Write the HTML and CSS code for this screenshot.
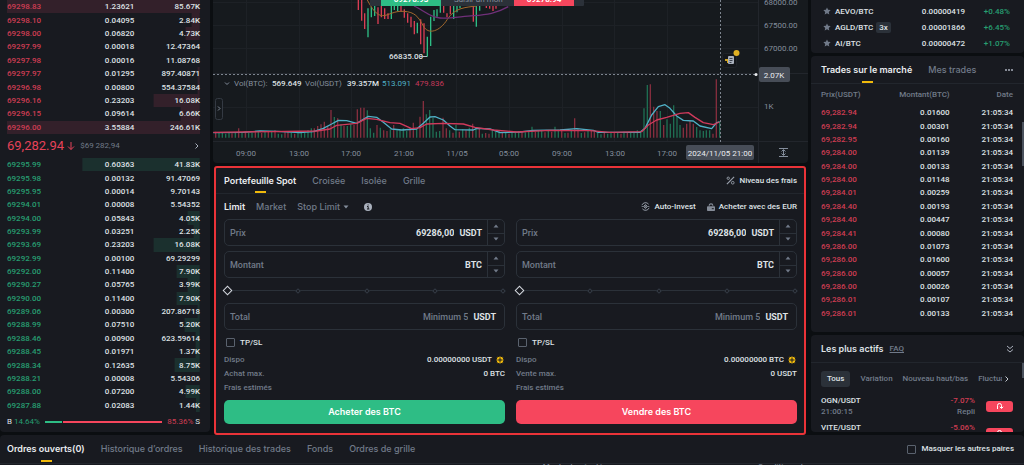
FILE: index.html
```html
<!DOCTYPE html>
<html lang="fr">
<head>
<meta charset="utf-8">
<meta name="viewport" content="width=device-width, initial-scale=1">
<title>BTC/USDT – Trading Spot</title>
<link rel="stylesheet" href="styles.css">
<script src="chart.js" defer></script>
</head>
<body>
<main class="desk">
  <section class="panel book" aria-label="Carnet d'ordres">
    <table class="book-table asks">
      <tr style="--depth:100%"><td>69298.83</td><td>1.23621</td><td>85.67K</td></tr>
      <tr style="--depth:4%"><td>69298.10</td><td>0.04095</td><td>2.84K</td></tr>
      <tr style="--depth:7%"><td>69298.00</td><td>0.06820</td><td>4.73K</td></tr>
      <tr style="--depth:0%"><td>69297.99</td><td>0.00018</td><td>12.47364</td></tr>
      <tr style="--depth:0%"><td>69297.98</td><td>0.00016</td><td>11.08768</td></tr>
      <tr style="--depth:1%"><td>69297.97</td><td>0.01295</td><td>897.40871</td></tr>
      <tr style="--depth:1%"><td>69296.98</td><td>0.00800</td><td>554.37584</td></tr>
      <tr style="--depth:24%"><td>69296.16</td><td>0.23203</td><td>16.08K</td></tr>
      <tr style="--depth:10%"><td>69296.15</td><td>0.09614</td><td>6.66K</td></tr>
      <tr style="--depth:100%"><td>69296.00</td><td>3.55884</td><td>246.61K</td></tr>
    </table>
    <div class="last-price">
      <strong>69,282.94</strong>
      <svg class="arrow" viewBox="0 0 8 10" aria-hidden="true"><path d="M4 1v7.500M1 5.500l3 3 3-3"/></svg>
      <span>$69 282,94</span>
      <svg class="more" viewBox="0 0 6 8" aria-hidden="true"><path d="M1.500 1.500L4 4 1.500 6.500"/></svg>
    </div>
    <table class="book-table bids">
      <tr style="--depth:61%"><td>69295.99</td><td>0.60363</td><td>41.83K</td></tr>
      <tr style="--depth:0%"><td>69295.98</td><td>0.00132</td><td>91.47069</td></tr>
      <tr style="--depth:0%"><td>69295.95</td><td>0.00014</td><td>9.70143</td></tr>
      <tr style="--depth:0%"><td>69294.01</td><td>0.00008</td><td>5.54352</td></tr>
      <tr style="--depth:6%"><td>69294.00</td><td>0.05843</td><td>4.05K</td></tr>
      <tr style="--depth:3%"><td>69293.99</td><td>0.03251</td><td>2.25K</td></tr>
      <tr style="--depth:24%"><td>69293.69</td><td>0.23203</td><td>16.08K</td></tr>
      <tr style="--depth:0%"><td>69292.99</td><td>0.00100</td><td>69.29299</td></tr>
      <tr style="--depth:12%"><td>69292.00</td><td>0.11400</td><td>7.90K</td></tr>
      <tr style="--depth:6%"><td>69290.27</td><td>0.05765</td><td>3.99K</td></tr>
      <tr style="--depth:12%"><td>69290.00</td><td>0.11400</td><td>7.90K</td></tr>
      <tr style="--depth:1%"><td>69289.06</td><td>0.00300</td><td>207.86718</td></tr>
      <tr style="--depth:8%"><td>69288.99</td><td>0.07510</td><td>5.20K</td></tr>
      <tr style="--depth:2%"><td>69288.46</td><td>0.00900</td><td>623.59614</td></tr>
      <tr style="--depth:2%"><td>69288.45</td><td>0.01971</td><td>1.37K</td></tr>
      <tr style="--depth:13%"><td>69288.34</td><td>0.12635</td><td>8.75K</td></tr>
      <tr style="--depth:0%"><td>69288.21</td><td>0.00008</td><td>5.54306</td></tr>
      <tr style="--depth:7%"><td>69288.00</td><td>0.07200</td><td>4.99K</td></tr>
      <tr style="--depth:2%"><td>69287.88</td><td>0.02083</td><td>1.44K</td></tr>
    </table>
    <div class="ratio">
      <span>B <span class="up">14.64%</span></span>
      <span class="ratio-bar"><i style="width:14.64%"></i><b></b></span>
      <span><span class="down">85.36%</span> S</span>
    </div>
  </section>

  <div class="center">
    <section class="chart" aria-label="Graphique">
      <svg viewBox="213 0 595 163" role="img" aria-label="Cours et volume BTC/USDT">
        <path class="grid" d="M213 2.500H758M213 25.500H758M213 48.500H758M213 107.500H758M246.500 0V141M299.500 0V141M351.500 0V141M404.500 0V141M456.500 0V141M509.500 0V141M562.500 0V141M614.500 0V141M667.500 0V141"/>
        <path class="axis" d="M758.500 0V163M213 141.500H808M213 73.500H808"/>
        <g transform="translate(210 0) scale(.33333)">
          <path class="candle-down" d="M445 0V30M455 0V62M464 40V87M504 22V72M514 18V52M524 25V57M534 40V57M573 18V35M583 28V53M593 40V68M603 50V82M613 63V103M632 58V133M642 70V160M701 14V38M711 40V52M721 18V43M790 18V65M829 14V24M839 14V26M849 18V33M858 14V26"/>
          <path class="candle-up" d="M474 25V112M484 20V52M494 18V48M544 18V57M553 18V30M563 18V33M622 68V100M652 110V170M662 50V138M672 30V63M681 28V50M691 16V38M731 18V57M741 18V37M750 14V25M799 18V80M809 14V32"/>
          <path class="ma-orange" d="M472 0C485 25 500 47 518 47S550 32 582 34S625 50 640 78S690 94 712 58S770 22 800 18"/>
          <path class="ma-purple" d="M612 18C640 30 660 52 690 54S750 50 790 47S860 40 895 20"/>
          <g id="volume"></g>
          <path class="vol-blue" d="M10 398L100 397 150 393 200 394 270 398 310 395 340 385 365 372 385 361 410 362 440 370 460 358 475 349 500 352 520 367 545 387 575 390 620 387 640 370 660 351 675 350 700 360 720 378 735 389 790 390 800 385 840 387 870 398 930 396 970 391 1050 390 1100 386 1150 391 1165 397 1290 397 1305 385 1325 345 1345 320 1365 314 1380 325 1400 348 1420 361 1450 363 1470 378 1505 386 1520 368 1528 366"/>
          <path class="vol-red" d="M10 397L320 393 360 387 380 376 440 370 470 355 500 358 540 368 570 370 605 386 630 383 650 372 700 370 760 372 795 382 850 390 920 396 1020 391 1140 392 1200 397 1295 395 1315 375 1340 360 1370 352 1410 340 1435 338 1455 352 1480 368 1510 374 1528 366"/>
        </g>
        <path class="cross" d="M213 74.500H756M720.500 0V142"/>
        <circle cx="756" cy="74.500" r="1.500" fill="#eaecef"/>
        <rect x="370" y="-12" width="214" height="18" rx="1" fill="#2b3139"/>
        <rect x="381" y="-12" width="60" height="18" fill="#2ebd85"/>
        <rect x="514" y="-12" width="60" height="18" fill="#f6465d"/>
        <text class="quote" x="411" y="2">69278.93</text>
        <text class="quote" x="544" y="2">69278.94</text>
        <text class="hint" x="454" y="2">Saisir un mon</text>
        <text class="low" x="389" y="59">66835.00</text>
        <path d="M420 56.500H427" stroke="#b7bdc6"/>
        <path d="M225 82.500l2 2 2-2" fill="none" stroke="#848e9c"/>
        <g>
          <text x="234" y="86">Vol(BTC):</text><text class="bright" x="272" y="86">569.649</text>
          <text x="305" y="86">Vol(USDT)</text><text class="bright" x="347" y="86">39.357M</text>
          <text class="blue" x="382" y="86">513.091</text><text class="red" x="415" y="86">479.836</text>
        </g>
        <rect x="215.500" y="98.500" width="7" height="21" rx="2" fill="#161a1e" stroke="#343a43"/>
        <path d="M218 106.500l2 2-2 2" fill="none" stroke="#848e9c"/>
        <rect x="722.500" y="53.500" width="14" height="14" rx="2" fill="#14171b" stroke="#1f2328"/>
        <circle cx="736.500" cy="53" r="3" fill="#e0b022"/>
        <path d="M725 59h4v4h-2v-2h-2z" fill="#d3a51f"/>
        <rect x="728" y="56" width="6" height="8" rx="1" fill="#aab1bd"/>
        <path d="M729.500 58.500h3M729.500 60.500h3M729.500 62.500h2" stroke="#3a414b"/>
        <g>
          <text x="764" y="5">68000.00</text><text x="764" y="28">67500.00</text><text x="764" y="51">67000.00</text><text x="764" y="109">1K</text>
        </g>
        <g class="mid">
          <text x="246" y="156">09:00</text><text x="299" y="156">13:00</text><text x="351" y="156">17:00</text><text x="404" y="156">21:00</text><text x="457" y="156">11/05</text><text x="509" y="156">05:00</text><text x="562" y="156">09:00</text><text x="615" y="156">13:00</text><text x="667" y="156">17:00</text>
        </g>
        <rect x="759" y="67" width="31" height="15" rx="2" fill="#474d57"/>
        <text class="tag" x="774" y="78">2.07K</text>
        <rect x="686" y="145" width="68" height="15" rx="2" fill="#474d57"/>
        <text class="tag" x="720" y="156">2024/11/05 21:00</text>
        <path d="M779 148.500h9M779 156.500h9M783.500 150v5M781.500 151.500l2-2 2 2M781.500 153.500l2 2 2-2" fill="none" stroke="#848e9c"/>
      </svg>
    </section>

    <section class="trade" aria-label="Passer un ordre">
      <header class="trade-head">
        <nav class="tabs">
          <button class="tab active">Portefeuille Spot</button>
          <button class="tab">Croisée</button>
          <button class="tab">Isolée</button>
          <button class="tab">Grille</button>
        </nav>
        <a class="tool" href="#frais"><svg viewBox="0 0 10 10" aria-hidden="true"><path d="M1 9l8-8" stroke-width="1.300"/><circle cx="2.500" cy="2.500" r="1.300"/><circle cx="7.500" cy="7.500" r="1.500"/></svg>Niveau des frais</a>
      </header>
      <div class="order-types">
        <button class="type active">Limit</button>
        <button class="type">Market</button>
        <button class="type">Stop Limit <svg viewBox="0 0 6 4" aria-hidden="true"><path d="M.5.500h5L3 3.500z"/></svg></button>
        <button class="info" aria-label="Informations"><svg viewBox="0 0 8 8" aria-hidden="true"><circle cx="4" cy="4" r="4"/><path d="M3 3.500h1.200V6M3 6h2.400M3.600 2h1" stroke="#181a20" fill="none"/></svg></button>
        <a class="tool push" href="#auto"><svg viewBox="0 0 10 10" aria-hidden="true"><path d="M1 3.500A4.300 4.300 0 0 1 8.500 2.500M9 6.500A4.300 4.300 0 0 1 1.500 7.500M.8 5H2M8 5h1.200"/><path d="M5 2.800L7.200 5 5 7.200 2.800 5z"/><circle cx="5" cy="5" r=".7"/></svg>Auto-Invest</a>
        <a class="tool" href="#eur"><svg class="solid" viewBox="0 0 10 10" aria-hidden="true"><path d="M1 4h8a1 1 0 0 1 1 1v4a1 1 0 0 1-1 1H1a1 1 0 0 1-1-1V5a1 1 0 0 1 1-1zM2 3.500a3 3 0 0 1 6-.5v.5H6.700a1.700 1.700 0 0 0-3.400 0z"/><path d="M6 6.500h2.500v1.200H6z" fill="#181a20"/></svg>Acheter avec des EUR</a>
      </div>
      <div class="forms">
        <form class="order">
          <div class="field"><label for="bp">Prix</label><input id="bp" value="69286,00"><span class="unit">USDT</span><span class="stepper"><button type="button" aria-label="Augmenter"><svg viewBox="0 0 6 4"><path d="M3 .5l2.500 3h-5z"/></svg></button><button type="button" aria-label="Diminuer"><svg viewBox="0 0 6 4"><path d="M.5.500h5L3 3.500z"/></svg></button></span></div>
          <div class="field"><label for="bm">Montant</label><input id="bm"><span class="unit">BTC</span><span class="stepper"><button type="button" aria-label="Augmenter"><svg viewBox="0 0 6 4"><path d="M3 .5l2.500 3h-5z"/></svg></button><button type="button" aria-label="Diminuer"><svg viewBox="0 0 6 4"><path d="M.5.500h5L3 3.500z"/></svg></button></span></div>
          <div class="slider"><div class="marks"><i></i><i></i><i></i><i></i><i></i></div><input type="range" min="0" max="100" value="0" aria-label="Part du solde à acheter"></div>
          <div class="field total"><label for="bt">Total</label><input id="bt" placeholder="Minimum 5"><span class="unit">USDT</span></div>
          <label class="check"><input type="checkbox">TP/SL</label>
          <dl class="facts">
            <div><dt>Dispo</dt><dd>0.00000000 USDT <svg viewBox="0 0 8 8" aria-hidden="true"><circle cx="4" cy="4" r="4"/><path d="M4 1.500v5M1.500 4h5"/></svg></dd></div>
            <div><dt>Achat max.</dt><dd>0 BTC</dd></div>
            <div><dt>Frais estimés</dt><dd></dd></div>
          </dl>
          <button type="button" class="submit buy">Acheter des BTC</button>
        </form>
        <form class="order">
          <div class="field"><label for="sp">Prix</label><input id="sp" value="69286,00"><span class="unit">USDT</span><span class="stepper"><button type="button" aria-label="Augmenter"><svg viewBox="0 0 6 4"><path d="M3 .5l2.500 3h-5z"/></svg></button><button type="button" aria-label="Diminuer"><svg viewBox="0 0 6 4"><path d="M.5.500h5L3 3.500z"/></svg></button></span></div>
          <div class="field"><label for="sm">Montant</label><input id="sm"><span class="unit">BTC</span><span class="stepper"><button type="button" aria-label="Augmenter"><svg viewBox="0 0 6 4"><path d="M3 .5l2.500 3h-5z"/></svg></button><button type="button" aria-label="Diminuer"><svg viewBox="0 0 6 4"><path d="M.5.500h5L3 3.500z"/></svg></button></span></div>
          <div class="slider"><div class="marks"><i></i><i></i><i></i><i></i><i></i></div><input type="range" min="0" max="100" value="0" aria-label="Part du solde à vendre"></div>
          <div class="field total"><label for="st">Total</label><input id="st" placeholder="Minimum 5"><span class="unit">USDT</span></div>
          <label class="check"><input type="checkbox">TP/SL</label>
          <dl class="facts">
            <div><dt>Dispo</dt><dd>0.00000000 BTC <svg viewBox="0 0 8 8" aria-hidden="true"><circle cx="4" cy="4" r="4"/><path d="M4 1.500v5M1.500 4h5"/></svg></dd></div>
            <div><dt>Vente max.</dt><dd>0 USDT</dd></div>
            <div><dt>Frais estimés</dt><dd></dd></div>
          </dl>
          <button type="button" class="submit sell">Vendre des BTC</button>
        </form>
      </div>
    </section>
  </div>

  <aside class="side">
    <section class="panel pairs" aria-label="Paires">
      <table>
        <tr><td><svg class="star" viewBox="0 0 10 10" aria-hidden="true"><path d="M5 .5l1.400 3 3.200.4-2.400 2.200.7 3.300L5 7.800 2.100 9.400l.7-3.300L.4 3.900l3.200-.4z"/></svg>AEVO/BTC</td><td>0.00000419</td><td>+0.48%</td></tr>
        <tr><td><svg class="star" viewBox="0 0 10 10" aria-hidden="true"><path d="M5 .5l1.400 3 3.200.4-2.400 2.200.7 3.300L5 7.800 2.100 9.400l.7-3.300L.4 3.900l3.200-.4z"/></svg>AGLD/BTC<span class="lever">3x</span></td><td>0.00001866</td><td>+6.45%</td></tr>
        <tr><td><svg class="star" viewBox="0 0 10 10" aria-hidden="true"><path d="M5 .5l1.400 3 3.200.4-2.400 2.200.7 3.300L5 7.800 2.100 9.400l.7-3.300L.4 3.900l3.200-.4z"/></svg>AI/BTC</td><td>0.00000472</td><td>+1.07%</td></tr>
      </table>
    </section>

    <section class="panel trades">
      <header class="side-head">
        <nav class="tabs">
          <button class="tab active">Trades sur le marché</button>
          <button class="tab">Mes trades</button>
        </nav>
        <button class="dots" aria-label="Plus"><svg viewBox="0 0 10 4"><circle cx="2" cy="2" r="1"/><circle cx="5" cy="2" r="1"/><circle cx="8" cy="2" r="1"/></svg></button>
      </header>
      <div class="trade-cols"><span>Prix(USDT)</span><span>Montant(BTC)</span><span>Date</span></div>
      <table>
        <tbody>
          <tr><td>69,282.94</td><td>0.01600</td><td>21:05:34</td></tr>
          <tr><td>69,282.94</td><td>0.00301</td><td>21:05:34</td></tr>
          <tr><td>69,282.95</td><td>0.00160</td><td>21:05:34</td></tr>
          <tr><td>69,284.00</td><td>0.01139</td><td>21:05:34</td></tr>
          <tr><td>69,284.00</td><td>0.00133</td><td>21:05:34</td></tr>
          <tr><td>69,284.00</td><td>0.01148</td><td>21:05:34</td></tr>
          <tr><td>69,284.01</td><td>0.00259</td><td>21:05:34</td></tr>
          <tr><td>69,284.40</td><td>0.00193</td><td>21:05:34</td></tr>
          <tr><td>69,284.40</td><td>0.00447</td><td>21:05:34</td></tr>
          <tr><td>69,284.41</td><td>0.00080</td><td>21:05:34</td></tr>
          <tr><td>69,286.00</td><td>0.01073</td><td>21:05:34</td></tr>
          <tr><td>69,286.00</td><td>0.01600</td><td>21:05:34</td></tr>
          <tr><td>69,286.00</td><td>0.00057</td><td>21:05:34</td></tr>
          <tr><td>69,286.00</td><td>0.00026</td><td>21:05:34</td></tr>
          <tr><td>69,286.01</td><td>0.00107</td><td>21:05:34</td></tr>
          <tr><td>69,286.01</td><td>0.00133</td><td>21:05:34</td></tr>
        </tbody>
      </table>
      <i class="scroll tall"></i>
    </section>

    <section class="panel movers">
      <header class="side-head">
        <h2>Les plus actifs</h2><a href="#faq">FAQ</a>
        <button class="dots" aria-label="Réduire"><svg class="chevrons" viewBox="0 0 8 8"><path d="M1 1l3 2.500L7 1M1 4.500L4 7l3-2.500"/></svg></button>
      </header>
      <nav class="chips">
        <button class="chip active">Tous</button>
        <button class="chip">Variation</button>
        <button class="chip">Nouveau haut/bas</button>
        <button class="chip fade">Fluctua</button>
        <svg viewBox="0 0 6 8" aria-hidden="true"><path d="M1.500 1.500L4 4 1.500 6.500"/></svg>
      </nav>
      <ul class="mover-list">
        <li><span>OGN/USDT<small>21:00:15</small></span><span class="change"><em>-7.07%</em><small>Repli</small></span><button aria-label="Repli"><svg viewBox="0 0 10 8"><path d="M2.500 7V3.500a2 2 0 0 1 4 0V6M4.800 4.800l1.700 1.700 1.700-1.700"/></svg></button></li>
        <li><span>VITE/USDT<small>21:00:10</small></span><span class="change"><em>-5.06%</em><small>Repli</small></span><button aria-label="Repli"><svg viewBox="0 0 10 8"><path d="M2.500 7V3.500a2 2 0 0 1 4 0V6M4.800 4.800l1.700 1.700 1.700-1.700"/></svg></button></li>
      </ul>
      <i class="scroll low-scroll"></i>
    </section>
  </aside>
</main>

<section class="orders">
  <div class="orders-head">
    <nav class="tabs">
      <button class="tab active">Ordres ouverts(0)</button>
      <button class="tab">Historique d’ordres</button>
      <button class="tab">Historique des trades</button>
      <button class="tab">Fonds</button>
      <button class="tab">Ordres de grille</button>
    </nav>
    <label class="check"><input type="checkbox">Masquer les autres paires</label>
  </div>
  <div class="orders-cols"><span>Montant exécuté</span><span>Conditions de</span></div>
</section>
</body>
</html>
```

FILE: styles.css
```css
:root {
  --bg: #0b0e11;
  --panel: #181a20;
  --line: #2b3139;
  --text: #dfe2e6;
  --muted: #717a89;
  --green: #2ebd85;
  --red: #f6465d;
  --ui: Roboto, "Liberation Sans", sans-serif;
  --title: Inter, Roboto, sans-serif;
}

* { box-sizing: border-box; }

body {
  margin: 0;
  height: 100vh;
  overflow: hidden;
  background: var(--bg);
  color: var(--text);
  font: 500 9px/12px var(--ui);
}

button, input {
  margin: 0;
  padding: 0;
  border: 0;
  background: none;
  color: inherit;
  font: inherit;
}

a { color: inherit; text-decoration: none; }
svg { display: block; }
table { border-collapse: collapse; table-layout: fixed; width: 100%; }
td { padding: 0; text-align: right; }
td:first-child { text-align: left; }

.desk {
  display: grid;
  grid-template-columns: 210px minmax(0, 1fr) 213px;
  gap: 3px;
}

.panel { background: var(--panel); border-radius: 4px; overflow: hidden; }

/* Order book */
.book { margin-bottom: 3px; padding: 0 10px 0 7px; border-radius: 0 0 4px 4px; }
.book-table { font: 500 8px/11px var(--ui); }
.book-table tr {
  background: linear-gradient(to left, var(--shade) var(--depth), transparent var(--depth));
}
.book-table td:first-child { width: 34%; color: var(--side); }
.book-table td:nth-child(2) { width: 32%; }
.asks { height: 134px; --side: #cf3d53; --shade: #33202a; }
.bids { height: 254px; --side: #279e71; --shade: #1b302e; }

.last-price {
  display: flex;
  align-items: center;
  gap: 3px;
  height: 24px;
  color: var(--muted);
  font: 8px/12px var(--ui);
}
.last-price strong { color: #e64259; font-size: 13px; font-weight: 400; }
.last-price .arrow { width: 8px; height: 10px; margin-right: 2px; fill: none; stroke: #e64259; }
.last-price .more { width: 6px; height: 8px; margin-left: auto; fill: none; stroke: #aab1bd; }

.ratio {
  display: flex;
  align-items: center;
  gap: 5px;
  height: 20px;
  font: 8px/12px var(--ui);
}
.ratio .up { color: #279e71; }
.ratio .down { color: #cf3d53; }
.ratio-bar { display: flex; flex: 1; gap: 1px; height: 2px; }
.ratio-bar i { background: var(--green); }
.ratio-bar b { flex: 1; background: var(--red); }

/* Chart */
.center { display: flex; flex-direction: column; gap: 3px; min-width: 0; }
.chart { background: #161a1e; border-radius: 0 0 4px 4px; overflow: hidden; }
.chart svg { width: 100%; }
.chart text { font: 8px var(--ui); fill: #848e9c; }
.chart .grid { stroke: #1d2126; }
.chart .axis { stroke: #22262c; }
.candle-up, .candle-down { stroke-width: 4; }
.candle-up { stroke: #2ebd85; }
.candle-down { stroke: #d93d54; }
.ma-orange, .ma-purple, .vol-blue, .vol-red { fill: none; stroke-linejoin: round; }
.ma-orange { stroke: #a4692c; stroke-width: 3; }
.ma-purple { stroke: #70307a; stroke-width: 4; }
.vol-blue { stroke: #4fb0c6; stroke-width: 4; }
.vol-red { stroke: #d13a5c; stroke-width: 4; }
.bar-up, .bar-down { fill: none; stroke-width: 4; }
.bar-up { stroke: #1f6e52; }
.bar-down { stroke: #852e3e; }
.cross { stroke: #7d858f; stroke-dasharray: 2 2; }
.chart .quote { fill: #fff; text-anchor: middle; font-weight: 700; }
.chart .low, .chart .bright { fill: var(--text); font-weight: 500; }
.chart .blue { fill: #4fb0c6; }
.chart .red { fill: #c5385a; }
.chart .mid text, .chart .tag { text-anchor: middle; }
.chart .tag { fill: #eaecef; }

/* Order entry */
.trade {
  margin: 0 2px 0 1px;
  border: 2px solid #ea3338;
  border-radius: 3px;
  background: var(--panel);
}
.tabs { display: flex; gap: 16px; font-family: var(--title); }
.tab { position: relative; height: 25px; color: var(--muted); }
.active.tab, .active.type { color: #eaecef; font-weight: 600; }
.tab.active::after {
  content: "";
  position: absolute;
  left: calc(50% - 5px);
  bottom: 0;
  width: 11px;
  height: 2px;
  background: #f0b90b;
}
.trade-head {
  display: flex;
  justify-content: space-between;
  padding: 0 7px 0 8px;
  border-bottom: 1px solid #22262d;
}
.tool { display: flex; align-items: center; gap: 4px; font-size: 8px; }
.tool svg { width: 9px; height: 9px; fill: none; stroke: #9aa1ad; }
.tool .solid { fill: #858c98; stroke: none; width: 8px; height: 8px; }
.order-types {
  display: flex;
  align-items: center;
  gap: 11px;
  height: 25px;
  padding: 0 7px 0 8px;
}
.type { display: flex; align-items: center; gap: 3px; color: var(--muted); font-family: var(--title); }
.type svg { width: 6px; height: 4px; fill: #848e9c; }
.info { margin-left: 4px; }
.info svg { width: 8px; height: 8px; fill: #aab1bd; }
.push { margin-left: auto; }

.forms {
  display: grid;
  grid-template-columns: 1fr 1fr;
  gap: 11px;
  padding: 0 7px 9px 8px;
}
.order { display: flex; flex-direction: column; gap: 5px; min-width: 0; }
.field {
  display: flex;
  align-items: center;
  height: 27px;
  padding-left: 5px;
  border: 1px solid var(--line);
  border-radius: 5px;
}
.field label { color: var(--muted); }
.field input { flex: 1; min-width: 0; text-align: right; font-weight: 700; outline: 0; }
.field input::placeholder { color: var(--muted); font-weight: 500; opacity: 1; }
.unit { margin: 0 5px; font-weight: 700; }
.total .unit { margin-right: 8px; }
.stepper {
  display: grid;
  grid-template-rows: 1fr 1fr;
  align-self: stretch;
  width: 17px;
  border-left: 1px solid var(--line);
}
.stepper button { display: grid; place-items: center; }
.stepper button + button { border-top: 1px solid var(--line); }
.stepper svg { width: 6px; height: 4px; fill: #717a89; }

.slider { position: relative; height: 15px; }
.marks {
  display: flex;
  align-items: center;
  justify-content: space-between;
  height: 100%;
  padding-left: 4px;
  background: linear-gradient(#2b3139, #2b3139) center / calc(100% - 8px) 1px no-repeat;
}
.marks i {
  width: 4px;
  height: 4px;
  border: 1px solid #353c46;
  background: var(--panel);
  transform: rotate(45deg);
}
.slider input {
  position: absolute;
  inset: 0;
  width: 100%;
  height: 100%;
  appearance: none;
}
.slider input::-webkit-slider-thumb {
  appearance: none;
  width: 7px;
  height: 7px;
  border: 1px solid #d5d9df;
  background: var(--panel);
  transform: rotate(45deg);
}

.check { display: flex; align-items: center; gap: 5px; font-size: 8px; }
.check input {
  appearance: none;
  width: 9px;
  height: 9px;
  border: 1px solid #5a626e;
  border-radius: 1px;
}
.order .check { height: 15px; padding-left: 2px; }
.facts { margin: -2px 0 0; font-size: 8px; line-height: 14px; }
.facts div { display: flex; justify-content: space-between; height: 14px; }
.facts dt { color: var(--muted); }
.facts dd { display: flex; align-items: center; gap: 4px; margin: 0; }
.facts svg { width: 8px; height: 8px; margin-right: 1px; fill: #f0b90b; stroke: var(--panel); }
.submit { height: 24px; border-radius: 5px; color: #fff; font-family: var(--title); font-weight: 600; }
.buy { background: var(--green); }
.sell { background: var(--red); }

/* Right column */
.side { display: flex; flex-direction: column; gap: 3px; }
.side .panel { position: relative; padding: 0 11px 0 10px; }
.side .pairs { padding: 4px 14px 1px 12px; border-radius: 0 0 4px 4px; font-size: 8px; }
.pairs tr { height: 16px; }
.pairs td:first-child { width: 68px; white-space: nowrap; }
.pairs td { width: 74px; }
.pairs td:last-child { width: auto; color: #279e71; }
.star { display: inline-block; width: 8px; height: 8px; margin-right: 4px; vertical-align: -1px; fill: #717a89; }
.lever { margin-left: 3px; padding: 1px 3px; border-radius: 2px; background: #2b3139; }

.side-head {
  display: flex;
  align-items: center;
  margin: 0 -11px 0 -10px;
  padding: 0 10px;
  border-bottom: 1px solid #22262d;
}
.side-head .tab { height: 27px; }
.dots { margin-left: auto; }
.dots svg { width: 10px; height: 4px; fill: #aab1bd; }
.dots .chevrons { width: 8px; height: 8px; fill: none; stroke: #aab1bd; }
.trades { height: 276px; }
.trade-cols {
  display: grid;
  grid-template-columns: 33% 34% 1fr;
  height: 22px;
  align-items: center;
  color: var(--muted);
  font-size: 8px;
  text-align: right;
}
.trade-cols span:first-child { text-align: left; }
.trades table { height: 214px; font: 500 8px/11px var(--ui); }
.trades td:first-child { width: 33%; color: #cf3d53; }
.trades td:nth-child(2) { width: 34%; }

.movers { height: 97px; }
.movers .side-head { height: 28px; }
.movers h2 { margin: 0 6px 0 0; font: 600 9px/12px var(--title); }
.movers a { color: var(--muted); font-size: 8px; text-decoration: underline; }
.chips { display: flex; align-items: center; gap: 10px; height: 32px; white-space: nowrap; }
.chip { color: var(--muted); font-size: 8px; }
.chip.active { height: 16px; padding: 0 6px; border-radius: 3px; background: #2b3139; color: var(--text); }
.chip.fade { width: 24px; overflow: hidden; text-align: left; }
.chips svg { flex: none; width: 6px; height: 8px; margin-left: -8px; fill: none; stroke: #c5cad1; }
.mover-list { display: grid; gap: 5px; margin: 0; padding: 0; list-style: none; font-size: 8px; line-height: 11px; }
.mover-list li { display: grid; grid-template-columns: 1fr auto 27px; gap: 11px; align-items: center; }
.mover-list small { display: block; color: var(--muted); font-size: 8px; }
.mover-list em { color: #cf3d53; font-style: normal; }
.change { text-align: right; }
.mover-list button { display: grid; place-items: center; height: 11px; border-radius: 3px; background: var(--red); }
.mover-list svg { width: 10px; height: 8px; fill: none; stroke: #fff; }
.scroll { position: absolute; right: 0; width: 2px; background: #4a515c; }
.tall { top: 66px; height: 44px; }
.low-scroll { top: 28px; height: 15px; }

/* Open orders */
.orders { background: var(--panel); border-radius: 4px 4px 0 0; overflow: hidden; }
.orders-head {
  display: flex;
  align-items: center;
  justify-content: space-between;
  height: 29px;
  padding: 0 10px 0 7px;
  border-bottom: 1px solid #22262d;
}
.orders-cols {
  display: grid;
  grid-template-columns: 53% 21% 1fr;
  color: var(--muted);
  font-size: 8px;
  line-height: 6px;
}
.orders-cols span:first-child { grid-column: 2; }
```

FILE: chart.js
```js
const volume = [
  -18, 14, 16, 12, 15, -13, 17, -28, 16, -18, 14, 15, -16, 20, -14, 18, -17, 18, -22, 12,
  10, -16, -20, 14, -12, 16, 18, 14, 22, 28, -28, -35, -40, -48, -35, -83, 62, -58, 40, -35,
  35, 40, -38, -85, -90, -90, 82, 28, 15, -38, 30, -22, -20, 25, -38, 22, 22, 28, 20, -28,
  -45, 25, -63, -110, 70, 83, 60, 18, 20, -60, -28, 22, -15, 38, -18, 25, -22, 30, -42, 30,
  -28, 12, -14, -12, 22, 18, 20, -14, 16, -12, 18, 15, 20, -17, 16, 20, 33, -18, 22, 20,
  -16, 22, -18, 33, 24, -20, 14, -15, 20, -58, -26, 14, -16, 20, -22, -18, 14, 10, -14, 12,
  18, -14, 16, -12, 18, -16, 14, 18, 22, 20, 88, 158, -160, -93, -80, 80, -38, 55, 42, 97,
  62, 38, -30, -42, -50, -42, 32, 22, 20, 22, 22, -12, -175, 50
];

const baseline = 413;
const start = 17;
const step = 1512 / (volume.length - 1);

function drawBars(className, keep) {
  const path = document.createElementNS("http://www.w3.org/2000/svg", "path");
  path.setAttribute("class", className);
  path.setAttribute("d", volume
    .map((v, i) => keep(v) ? `M${Math.round(start + i * step)} ${baseline}v${-Math.abs(v)}` : "")
    .join(""));
  document.getElementById("volume").append(path);
}

drawBars("bar-up", v => v > 0);
drawBars("bar-down", v => v < 0);
```
